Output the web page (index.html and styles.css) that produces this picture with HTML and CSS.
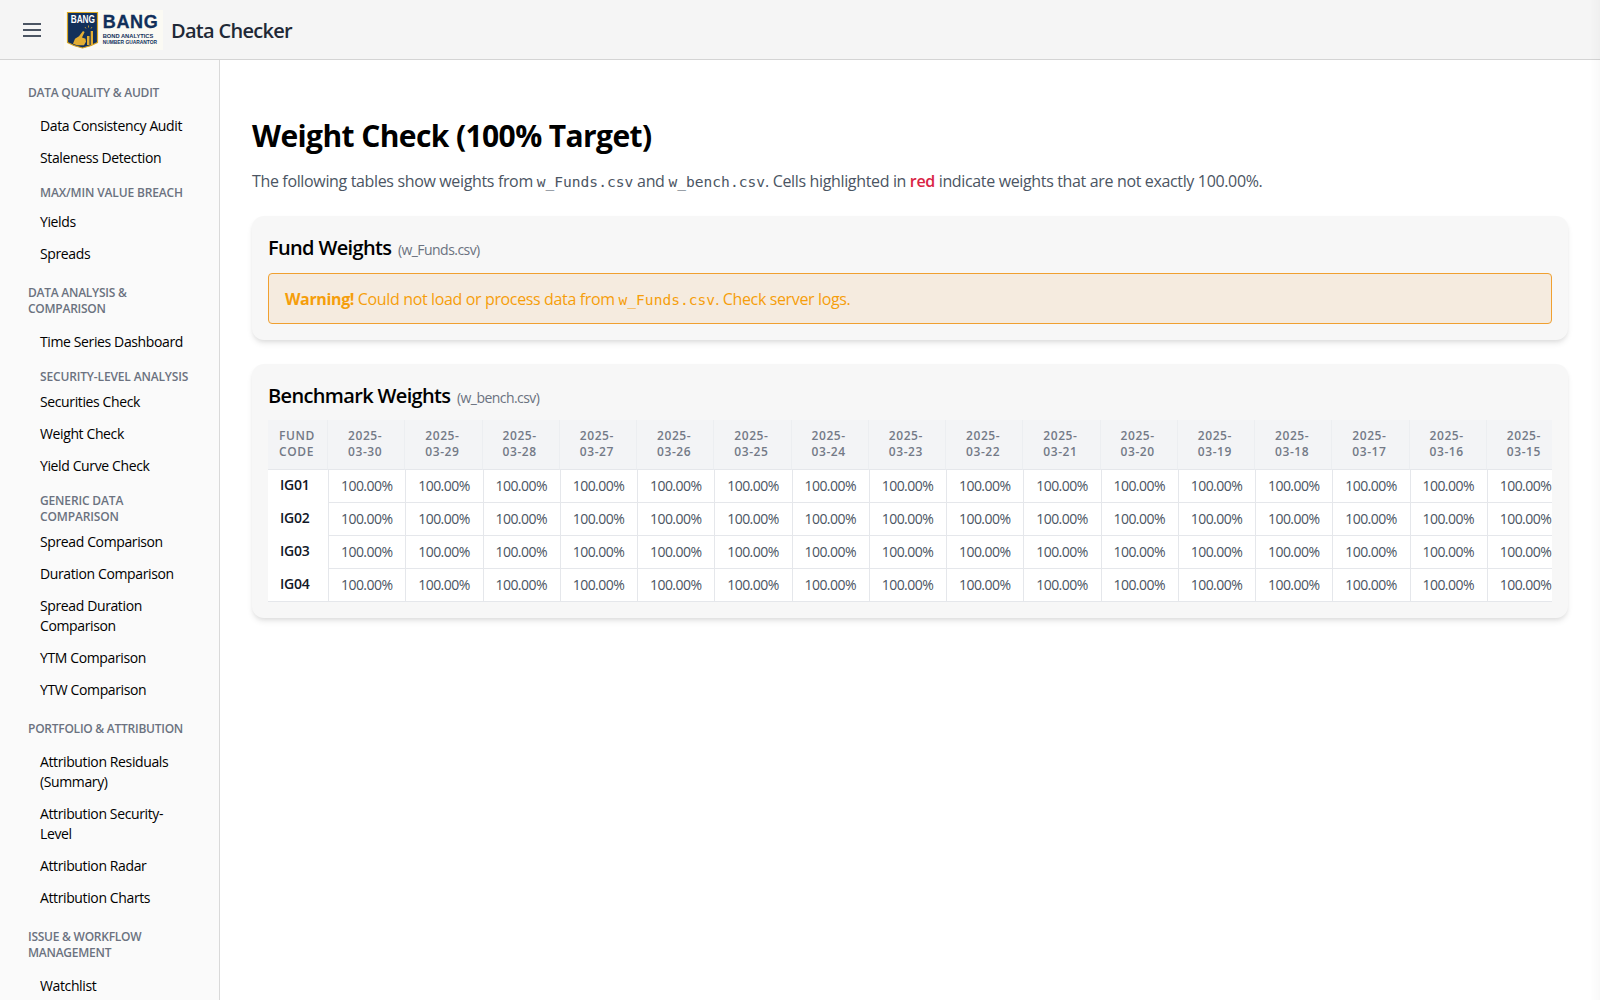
FILE: index.html
```html
<!DOCTYPE html>
<html lang="en">
<head>
<meta charset="utf-8">
<title>Data Checker</title>
<link rel="stylesheet" href="styles.css">
</head>
<body>
<header class="topbar">
  <button class="menu-btn" aria-label="Menu">
    <svg class="menu-icon" viewBox="0 0 18 14" width="18" height="14"><path d="M0 1h18M0 7h18M0 13h18"/></svg>
  </button>
  <svg class="logo" viewBox="0 0 99 40" width="99" height="40" role="img" aria-label="BANG">
    <rect width="99" height="40" fill="#fbfaf4"/>
    <path d="M3.5 2.500h30v30q-7 4-15 5.500q-8-1.500-15-5.500z" fill="#12305a" stroke="#d9a520" stroke-width="1.2"/>
    <text x="6.700" y="13.300" textLength="24.300" lengthAdjust="spacingAndGlyphs" class="logo-shield">BANG</text>
    <path class="logo-gold" d="M19 21l1.600 1-2.600 5.500 3.500 1.200.5 3-2 3.500h-7l-4-1.500 2-5 4-2.500z"/>
    <path class="logo-gold" d="M23 26h2.500v9h-2.500zM26.700 21h2.300v14h-2.300z"/>
    <path class="logo-spark" d="M21 17l1 1.500M24.500 15.500v2M28 17l-1 1.500"/>
    <text x="38.700" y="18" class="logo-name">BANG</text>
    <text x="38.700" y="27.700" textLength="50.600" lengthAdjust="spacingAndGlyphs" class="logo-sub">BOND ANALYTICS</text>
    <text x="38.700" y="34.300" textLength="54.300" lengthAdjust="spacingAndGlyphs" class="logo-sub">NUMBER GUARANTOR</text>
  </svg>
  <span class="app-title">Data Checker</span>
</header>
<div class="shell">
  <nav class="sidebar">
    <h3 class="nav-head">Data Quality &amp; Audit</h3>
    <a class="nav-link">Data Consistency Audit</a>
    <a class="nav-link">Staleness Detection</a>
    <h4 class="nav-sub nav-sub-loose">Max/Min Value Breach</h4>
    <a class="nav-link">Yields</a>
    <a class="nav-link">Spreads</a>
    <h3 class="nav-head">Data Analysis &amp; Comparison</h3>
    <a class="nav-link">Time Series Dashboard</a>
    <h4 class="nav-sub">Security-Level Analysis</h4>
    <a class="nav-link">Securities Check</a>
    <a class="nav-link">Weight Check</a>
    <a class="nav-link">Yield Curve Check</a>
    <h4 class="nav-sub">Generic Data Comparison</h4>
    <a class="nav-link">Spread Comparison</a>
    <a class="nav-link">Duration Comparison</a>
    <a class="nav-link">Spread Duration Comparison</a>
    <a class="nav-link">YTM Comparison</a>
    <a class="nav-link">YTW Comparison</a>
    <h3 class="nav-head">Portfolio &amp; Attribution</h3>
    <a class="nav-link">Attribution Residuals (Summary)</a>
    <a class="nav-link">Attribution Security-Level</a>
    <a class="nav-link">Attribution Radar</a>
    <a class="nav-link">Attribution Charts</a>
    <h3 class="nav-head">Issue &amp; Workflow Management</h3>
    <a class="nav-link">Watchlist</a>
  </nav>
  <main class="content">
    <h1 class="page-title">Weight Check (100% Target)</h1>
    <p class="intro">The following tables show weights from <code>w_Funds.csv</code> and <code>w_bench.csv</code>. Cells highlighted in <span class="red">red</span> indicate weights that are not exactly 100.00%.</p>
    <section class="card">
      <h2 class="card-title">Fund Weights <small>(w_Funds.csv)</small></h2>
      <div class="alert"><strong>Warning!</strong> Could not load or process data from <code>w_Funds.csv</code>. Check server logs.</div>
    </section>
    <section class="card">
      <h2 class="card-title">Benchmark Weights <small>(w_bench.csv)</small></h2>
      <div class="table-wrap">
        <table class="weights">
          <thead><tr><th class="fund-col">Fund Code</th><th>2025-03-30</th><th>2025-03-29</th><th>2025-03-28</th><th>2025-03-27</th><th>2025-03-26</th><th>2025-03-25</th><th>2025-03-24</th><th>2025-03-23</th><th>2025-03-22</th><th>2025-03-21</th><th>2025-03-20</th><th>2025-03-19</th><th>2025-03-18</th><th>2025-03-17</th><th>2025-03-16</th><th>2025-03-15</th></tr></thead>
          <tbody>
            <tr><th class="fund-col">IG01</th><td>100.00%</td><td>100.00%</td><td>100.00%</td><td>100.00%</td><td>100.00%</td><td>100.00%</td><td>100.00%</td><td>100.00%</td><td>100.00%</td><td>100.00%</td><td>100.00%</td><td>100.00%</td><td>100.00%</td><td>100.00%</td><td>100.00%</td><td>100.00%</td></tr>
            <tr><th class="fund-col">IG02</th><td>100.00%</td><td>100.00%</td><td>100.00%</td><td>100.00%</td><td>100.00%</td><td>100.00%</td><td>100.00%</td><td>100.00%</td><td>100.00%</td><td>100.00%</td><td>100.00%</td><td>100.00%</td><td>100.00%</td><td>100.00%</td><td>100.00%</td><td>100.00%</td></tr>
            <tr><th class="fund-col">IG03</th><td>100.00%</td><td>100.00%</td><td>100.00%</td><td>100.00%</td><td>100.00%</td><td>100.00%</td><td>100.00%</td><td>100.00%</td><td>100.00%</td><td>100.00%</td><td>100.00%</td><td>100.00%</td><td>100.00%</td><td>100.00%</td><td>100.00%</td><td>100.00%</td></tr>
            <tr><th class="fund-col">IG04</th><td>100.00%</td><td>100.00%</td><td>100.00%</td><td>100.00%</td><td>100.00%</td><td>100.00%</td><td>100.00%</td><td>100.00%</td><td>100.00%</td><td>100.00%</td><td>100.00%</td><td>100.00%</td><td>100.00%</td><td>100.00%</td><td>100.00%</td><td>100.00%</td></tr>
          </tbody>
        </table>
      </div>
    </section>
  </main>
</div>
<div class="edge-shade"></div>
</body>
</html>
```
FILE: styles.css
```css
* { box-sizing: border-box; }
html, body { height: 100%; }
body {
  margin: 0;
  height: 100vh;
  overflow: hidden;
  display: flex;
  flex-direction: column;
  background: #fff;
  color: #000;
  font-family: "Open Sans", "Noto Sans", sans-serif;
  font-size: 14px;
  letter-spacing: -0.25px;
}
.edge-shade {
  position: fixed;
  top: 0;
  right: 0;
  bottom: 0;
  width: 10px;
  background: linear-gradient(to right, rgba(0,0,0,0), rgba(0,0,0,.025));
  pointer-events: none;
}
.topbar {
  flex: none;
  height: 60px;
  display: flex;
  align-items: center;
  background: #f5f5f5;
  border-bottom: 1px solid #d4d4d4;
  padding-left: 23px;
}
.menu-btn { background: none; border: 0; padding: 0; display: flex; margin-right: 23px; }
.menu-icon { fill: none; stroke: #4b5563; stroke-width: 2; }
.logo { display: block; margin-right: 8px; }
.logo-shield { font: 700 10px "Liberation Sans", sans-serif; fill: #fff; letter-spacing: 0; }
.logo-name { font: 700 18px "Liberation Sans", sans-serif; fill: #12305a; stroke: #12305a; stroke-width: .3; letter-spacing: .7px; }
.logo-sub { font: 700 5.2px "Liberation Sans", sans-serif; fill: #12305a; letter-spacing: 0; }
.logo-gold { fill: #e2ad32; }
.logo-spark { fill: none; stroke: #e2ad32; stroke-width: .8; }
.app-title { font-size: 20px; font-weight: 600; color: #1f2937; letter-spacing: -0.7px; padding-top: 2px; }
.shell { flex: 1; min-height: 0; display: flex; }
.sidebar {
  flex: none;
  width: 220px;
  background: #fafafa;
  border-right: 1px solid #d9d9d9;
  padding: 24px 28px 0 28px;
  overflow: hidden;
}
.nav-head, .nav-sub {
  margin: 0;
  font-size: 12px;
  line-height: 16px;
  font-weight: 600;
  color: #6b7280;
  text-transform: uppercase;
}
.nav-head { margin: 14px 0 9px; padding-top: 1px; letter-spacing: -0.25px; }
.nav-head:first-child { margin-top: 0; }
.nav-sub { margin: 11px 0 1px 12px; letter-spacing: -0.15px; }
.nav-sub-loose { margin-bottom: 5px; }
.nav-link {
  display: block;
  padding: 6px 0 6px 12px;
  font-size: 14px;
  line-height: 20px;
  color: #000;
  letter-spacing: -0.38px;
}
.content { flex: 1; min-width: 0; padding: 56px 32px 0; }
.page-title { margin: 0 0 13px; font-size: 30px; line-height: 40px; font-weight: 700; letter-spacing: -0.6px; }
.intro { margin: 0 0 22px; font-size: 16px; line-height: 24px; color: #4b5563; letter-spacing: -0.35px; }
code { font-family: "DejaVu Sans Mono", monospace; font-size: 14.6px; letter-spacing: 0; }
.red { color: #d92344; font-weight: 600; }
.card {
  background: #f7f7f7;
  border-radius: 12px;
  padding: 18px 16px 16px;
  margin-bottom: 24px;
  box-shadow: 0 4px 6px -1px rgba(0,0,0,.1), 0 2px 4px -1px rgba(0,0,0,.06);
}
.card-title { margin: 0 0 10px; font-size: 20px; line-height: 28px; font-weight: 600; letter-spacing: -0.65px; }
.card-title small { font-size: 14px; line-height: 1; font-weight: 400; color: #6b7280; letter-spacing: -0.55px; margin-left: 2px; }
.alert {
  margin-top: 11px;
  border: 1px solid #f0a030;
  border-radius: 4px;
  background: #f5ebdf;
  color: #f59e0b;
  padding: 13px 16px 11px;
  font-size: 16px;
  line-height: 24px;
  letter-spacing: -0.36px;
}
.alert strong { font-weight: 700; }
.table-wrap { overflow: hidden; }
.weights { border-collapse: separate; border-spacing: 0; table-layout: fixed; width: 1296px; background: #fff; }
.weights thead th {
  width: 77.25px;
  height: 50px;
  background: #f3f4f6;
  color: #737a87;
  font-size: 12px;
  line-height: 16px;
  font-weight: 600;
  letter-spacing: .6px;
  text-transform: uppercase;
  text-align: center;
  padding: 0 15px 2px 13px;
  border-bottom: 1px solid #e5e7eb;
  border-right: 1px solid #eceef1;
}
.weights thead .fund-col { width: 60px; text-align: left; padding: 0 11px 2px; border-bottom: 0; }
.weights tbody th {
  text-align: left;
  padding: 0 12px 4px;
  font-size: 14px;
  font-weight: 600;
  background: #fff;
  color: #111827;
}
.weights td {
  height: 33px;
  padding: 0 0 2px 12px;
  font-size: 14px;
  color: #4b5563;
  white-space: nowrap;
  letter-spacing: -0.55px;
  border-bottom: 1px solid #e5e7eb;
  border-left: 1px solid #e5e7eb;
}
.weights tr:last-child th { border-bottom: 1px solid #e5e7eb; }
```
